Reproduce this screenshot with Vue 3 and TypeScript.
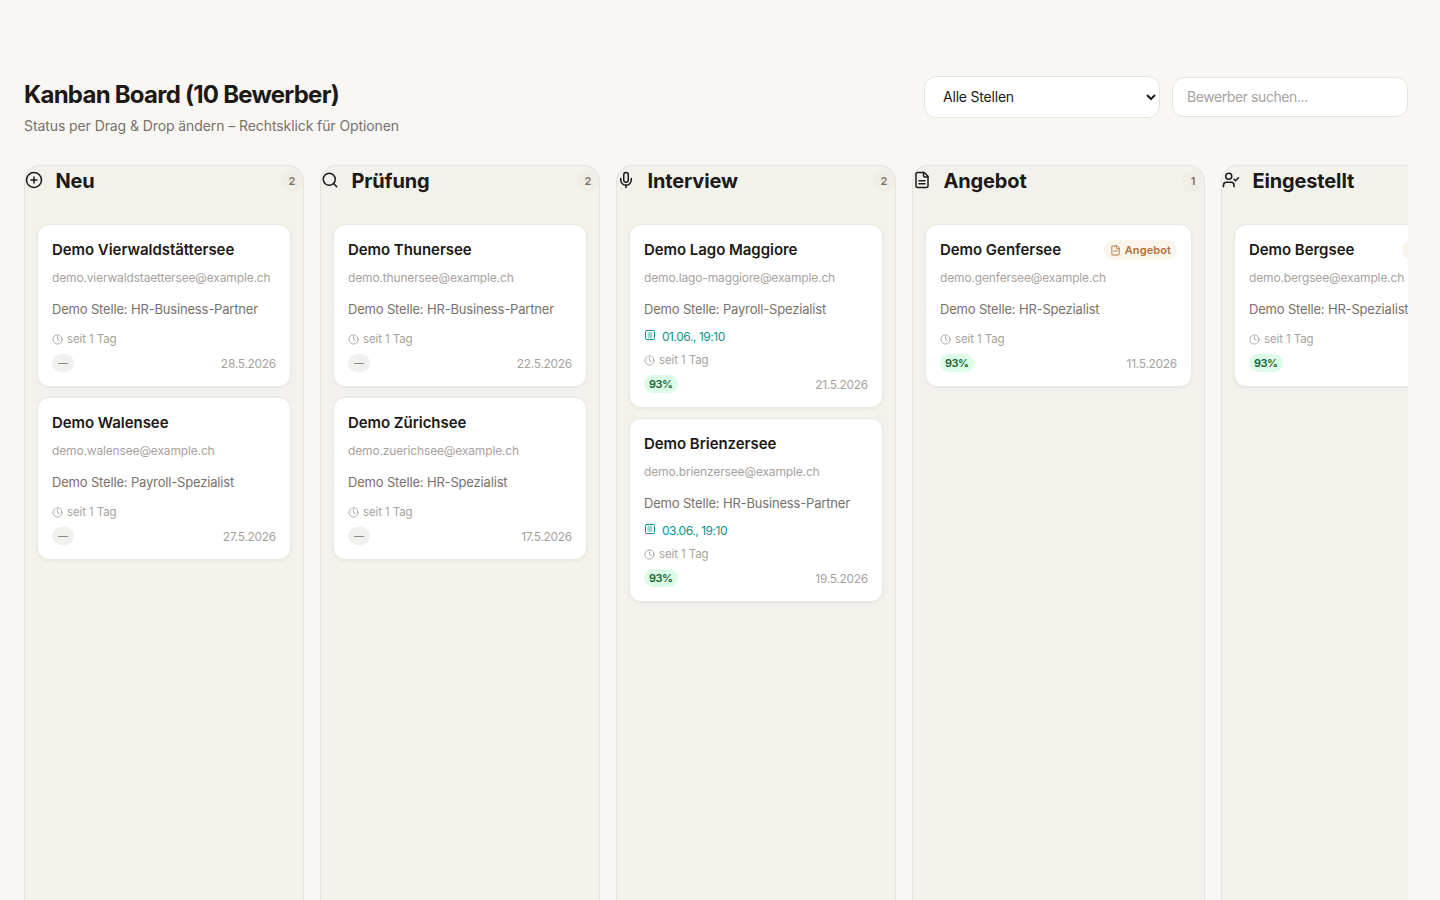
<script setup lang="ts">
import { ref } from 'vue'

interface Applicant {
  name: string
  email: string
  job: string
  date: string
  score?: string
  meeting?: string
  badge?: string
}

interface Column {
  key: string
  title: string
  width: number
  items: Applicant[]
}

const search = ref('')

const columns: Column[] = [
  {
    key: 'neu',
    title: 'Neu',
    width: 280,
    items: [
      { name: 'Demo Vierwaldstättersee', email: 'demo.vierwaldstaettersee@example.ch', job: 'Demo Stelle: HR-Business-Partner', date: '28.5.2026' },
      { name: 'Demo Walensee', email: 'demo.walensee@example.ch', job: 'Demo Stelle: Payroll-Spezialist', date: '27.5.2026' }
    ]
  },
  {
    key: 'pruefung',
    title: 'Prüfung',
    width: 280,
    items: [
      { name: 'Demo Thunersee', email: 'demo.thunersee@example.ch', job: 'Demo Stelle: HR-Business-Partner', date: '22.5.2026' },
      { name: 'Demo Zürichsee', email: 'demo.zuerichsee@example.ch', job: 'Demo Stelle: HR-Spezialist', date: '17.5.2026' }
    ]
  },
  {
    key: 'interview',
    title: 'Interview',
    width: 280,
    items: [
      { name: 'Demo Lago Maggiore', email: 'demo.lago-maggiore@example.ch', job: 'Demo Stelle: Payroll-Spezialist', date: '21.5.2026', score: '93%', meeting: '01.06., 19:10' },
      { name: 'Demo Brienzersee', email: 'demo.brienzersee@example.ch', job: 'Demo Stelle: HR-Business-Partner', date: '19.5.2026', score: '93%', meeting: '03.06., 19:10' }
    ]
  },
  {
    key: 'angebot',
    title: 'Angebot',
    width: 293,
    items: [
      { name: 'Demo Genfersee', email: 'demo.genfersee@example.ch', job: 'Demo Stelle: HR-Spezialist', date: '11.5.2026', score: '93%', badge: 'Angebot' }
    ]
  },
  {
    key: 'eingestellt',
    title: 'Eingestellt',
    width: 293,
    items: [
      { name: 'Demo Bergsee', email: 'demo.bergsee@example.ch', job: 'Demo Stelle: HR-Spezialist', date: '8.5.2026', score: '93%', badge: 'Eingestellt' }
    ]
  }
]
</script>

<template>
  <div class="page">
    <header class="top">
      <div class="heading">
        <h1>Kanban Board (10 Bewerber)</h1>
        <p>Status per Drag &amp; Drop ändern – Rechtsklick für Optionen</p>
      </div>
      <div class="filters">
        <select class="job-select">
          <option>Alle Stellen</option>
        </select>
        <input v-model="search" class="search" type="text" placeholder="Bewerber suchen..." />
      </div>
    </header>

    <div class="board">
      <section
        v-for="col in columns"
        :key="col.key"
        class="column"
        :style="{ flexBasis: col.width + 'px' }"
      >
        <div class="col-head">
          <div class="col-title">
            <svg class="col-icon" viewBox="0 0 24 24" fill="none" stroke="currentColor" stroke-width="2" stroke-linecap="round" stroke-linejoin="round">
              <template v-if="col.key === 'neu'">
                <circle cx="12" cy="12" r="10" />
                <path d="M8 12h8M12 8v8" />
              </template>
              <template v-else-if="col.key === 'pruefung'">
                <circle cx="11" cy="11" r="8" />
                <path d="m21 21-4.3-4.3" />
              </template>
              <template v-else-if="col.key === 'interview'">
                <path d="M12 2a3 3 0 0 0-3 3v7a3 3 0 0 0 6 0V5a3 3 0 0 0-3-3Z" />
                <path d="M19 10v2a7 7 0 0 1-14 0v-2" />
                <path d="M12 19v3" />
              </template>
              <template v-else-if="col.key === 'angebot'">
                <path d="M15 2H6a2 2 0 0 0-2 2v16a2 2 0 0 0 2 2h12a2 2 0 0 0 2-2V7Z" />
                <path d="M14 2v4a2 2 0 0 0 2 2h4" />
                <path d="M8 13h8M8 17h8" />
              </template>
              <template v-else>
                <path d="M16 21v-2a4 4 0 0 0-4-4H6a4 4 0 0 0-4 4v2" />
                <circle cx="9" cy="7" r="4" />
                <path d="m16 11 2 2 4-4" />
              </template>
            </svg>
            <h2>{{ col.title }}</h2>
          </div>
          <span class="count">{{ col.items.length }}</span>
        </div>

        <div class="cards">
          <article v-for="item in col.items" :key="item.email" class="card">
            <div class="card-top">
              <span class="name">{{ item.name }}</span>
              <span v-if="item.badge" class="status-badge">
                <svg viewBox="0 0 24 24" fill="none" stroke="currentColor" stroke-width="2" stroke-linecap="round" stroke-linejoin="round">
                  <path d="M15 2H6a2 2 0 0 0-2 2v16a2 2 0 0 0 2 2h12a2 2 0 0 0 2-2V7Z" />
                  <path d="M14 2v4a2 2 0 0 0 2 2h4" />
                  <path d="M8 13h8" />
                </svg>
                {{ item.badge }}
              </span>
            </div>
            <div class="email">{{ item.email }}</div>
            <div class="job">{{ item.job }}</div>
            <div v-if="item.meeting" class="meeting">
              <svg viewBox="0 0 24 24" fill="none" stroke="currentColor" stroke-width="2" stroke-linecap="round" stroke-linejoin="round">
                <rect x="3" y="3" width="18" height="18" rx="2.5" />
                <path d="M8 8h8M8 12h8M8 16h8" stroke-width="1.6" />
              </svg>
              {{ item.meeting }}
            </div>
            <div class="since">
              <svg viewBox="0 0 24 24" fill="none" stroke="currentColor" stroke-width="2" stroke-linecap="round" stroke-linejoin="round">
                <circle cx="12" cy="12" r="10" />
                <path d="M12 6v6l4 2" />
              </svg>
              seit 1 Tag
            </div>
            <div class="card-foot">
              <span v-if="item.score" class="score">{{ item.score }}</span>
              <span v-else class="score score-empty">—</span>
              <span class="date">{{ item.date }}</span>
            </div>
          </article>
        </div>
      </section>
    </div>
  </div>
</template>

<style>
html,
body {
  margin: 0;
  height: 100%;
  overflow: hidden;
  background: #f8f7f3;
}
</style>

<style scoped>
.page {
  box-sizing: border-box;
  height: 900px;
  padding: 76px 32px 0 24px;
  background: #f8f7f3;
  font-family: Inter, 'Noto Sans', sans-serif;
  color: #1c1917;
  overflow: hidden;
}

.top {
  display: flex;
  justify-content: space-between;
  align-items: flex-start;
  height: 89px;
}

.heading {
  padding-top: 3px;
}

h1 {
  margin: 0;
  font-size: 24px;
  line-height: 32px;
  font-weight: 700;
  letter-spacing: -0.76px;
}

.heading p {
  margin: 5px 0 0;
  font-size: 14px;
  line-height: 20px;
  color: #78716c;
  letter-spacing: -0.09px;
}

.filters {
  display: flex;
  align-items: center;
  gap: 12px;
}

.job-select,
.search {
  box-sizing: border-box;
  width: 236px;
  border: 1px solid #e7e3dc;
  border-radius: 12px;
  background: #fff;
  font-family: inherit;
  font-size: 14px;
  letter-spacing: -0.2px;
  color: #1c1917;
  outline: none;
}

.job-select {
  height: 42px;
  padding: 0 0 1px 14px;
}

.search {
  height: 40px;
  padding: 0 14px 1px;
  letter-spacing: -0.42px;
}

.search::placeholder {
  color: #a8a29e;
}

.board {
  display: flex;
  gap: 16px;
  height: 780px;
  overflow: hidden;
}

.column {
  box-sizing: border-box;
  flex: 0 0 280px;
  height: 780px;
  border: 1px solid #e7e3dc;
  border-radius: 16px;
  background: #f2f1ec;
}

.col-head {
  display: flex;
  justify-content: space-between;
  align-items: flex-start;
  height: 32px;
  margin-bottom: 26px;
}

.col-title {
  display: flex;
  align-items: flex-start;
  gap: 12.5px;
}

.col-icon {
  display: block;
  flex: none;
  width: 18px;
  height: 18px;
  margin-top: 4.5px;
  color: #1c1917;
}

h2 {
  margin: 0;
  font-size: 20px;
  line-height: 30px;
  font-weight: 700;
  letter-spacing: -0.15px;
}

.count {
  display: flex;
  align-items: center;
  justify-content: center;
  width: 22px;
  height: 22px;
  margin-top: 4px;
  border-radius: 50%;
  background: #efeee9;
  font-size: 11px;
  font-weight: 600;
  color: #78716c;
}

.cards {
  display: flex;
  flex-direction: column;
  gap: 10px;
  padding: 0 12px;
}

.card {
  box-sizing: border-box;
  padding: 15px 14px 14px;
  border: 1px solid #ebe8e1;
  border-radius: 12px;
  background: #fff;
  box-shadow: 0 1px 3px rgba(28, 25, 23, 0.06);
}

.card-top {
  display: flex;
  justify-content: space-between;
  align-items: center;
  height: 20px;
  white-space: nowrap;
}

.name {
  font-size: 15px;
  line-height: 20px;
  font-weight: 600;
  letter-spacing: -0.05px;
}

.status-badge {
  display: inline-flex;
  align-items: center;
  gap: 4px;
  height: 20px;
  padding: 0 6px;
  border-radius: 10px;
  background: #faf5eb;
  font-size: 11px;
  font-weight: 600;
  color: #b4703a;
  letter-spacing: 0.1px;
}

.status-badge svg {
  width: 11px;
  height: 11px;
}

.email {
  margin-top: 10px;
  font-size: 12px;
  line-height: 16px;
  color: #a8a29e;
  letter-spacing: -0.15px;
  white-space: nowrap;
}

.job {
  margin-top: 14px;
  font-size: 13px;
  line-height: 18px;
  color: #78716c;
  letter-spacing: -0.17px;
  white-space: nowrap;
}

.meeting {
  display: flex;
  align-items: center;
  gap: 6px;
  margin-top: 10px;
  height: 16px;
  font-size: 12px;
  color: #0d9488;
  letter-spacing: -0.45px;
}

.meeting svg {
  width: 12px;
  height: 12px;
  margin-bottom: 3px;
}

.since {
  display: flex;
  align-items: center;
  gap: 4px;
  margin-top: 14px;
  height: 14px;
  font-size: 11.5px;
  color: #a8a29e;
  letter-spacing: -0.1px;
}

.meeting + .since {
  margin-top: 9px;
}

.since svg {
  width: 11px;
  height: 11px;
}

.card-foot {
  display: flex;
  justify-content: space-between;
  align-items: center;
  height: 18px;
  margin-top: 8px;
}

.score {
  display: flex;
  align-items: center;
  justify-content: center;
  box-sizing: border-box;
  height: 18px;
  padding: 0 5px;
  border-radius: 9px;
  background: #dcfce7;
  font-size: 11px;
  font-weight: 600;
  color: #166534;
  letter-spacing: -0.5px;
}

.score-empty {
  width: 22px;
  padding: 0;
  background: #f0f0ee;
  color: #78716c;
  font-size: 10px;
  font-weight: 400;
  letter-spacing: 0;
}

.date {
  font-size: 12px;
  color: #a8a29e;
  letter-spacing: -0.3px;
}
</style>
